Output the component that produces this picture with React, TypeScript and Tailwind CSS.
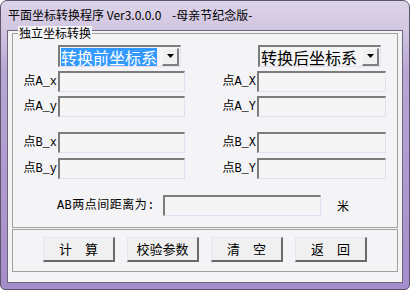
import React from "react";

const cjk = { fontFamily: '"Noto Sans CJK SC", "Liberation Sans", sans-serif' };
const mono = { fontFamily: '"Liberation Mono", "Noto Sans CJK SC", monospace' };

function Field({ w }: { w: string }) {
  return (
    <div
      className={`${w} h-[21px] bg-[#f5f5f5] border-t-2 border-l-2 border-t-[#7c7c7c] border-l-[#7c7c7c] border-r border-b border-r-[#e4def0] border-b-[#e4def0]`}
    />
  );
}

function Combo({ text, selected }: { text: string; selected?: boolean }) {
  return (
    <div className="w-[123px] h-[22px] flex items-center bg-[#f5f5f5] border-t-2 border-l-2 border-t-[#7c7c7c] border-l-[#7c7c7c] border-r border-b border-r-[#e4def0] border-b-[#e4def0] pl-[1px] pr-[1px]">
      <span
        className={`text-[16px] leading-[18px] h-[18px] ${selected ? "bg-[#3399ff] text-white" : "text-black"}`}
        style={cjk}
      >
        {text}
      </span>
      <div className="ml-auto w-[17px] h-[18px] bg-[#f0f0f0] border-t border-l border-t-[#f8f8f8] border-l-[#f8f8f8] border-r-2 border-b-2 border-r-[#808080] border-b-[#808080] flex items-center justify-center">
        <svg width="7" height="4" viewBox="0 0 7 4">
          <path d="M0 0H7L3.5 4Z" fill="#000" />
        </svg>
      </div>
    </div>
  );
}

function Row({ l, r, mt }: { l: string; r: string; mt: string }) {
  return (
    <div className={`flex items-center ${mt}`}>
      <span className="w-[45px] text-right text-[12px] leading-[14px] text-black pr-[1px]" style={mono}>
        {l}
      </span>
      <Field w="w-[127px]" />
      <span className="w-[72px] text-right text-[12px] leading-[14px] text-black pr-[1px]" style={mono}>
        {r}
      </span>
      <Field w="w-[129px]" />
    </div>
  );
}

function Btn({ children }: { children: React.ReactNode }) {
  return (
    <div
      className="w-[72px] h-[25px] bg-[#f0f0f0] border-t border-l border-t-[#ebe5f3] border-l-[#ebe5f3] border-r-2 border-b-2 border-r-[#6a6a6a] border-b-[#6a6a6a] flex items-center justify-center text-[13px] leading-[16px] text-black"
      style={cjk}
    >
      {children}
    </div>
  );
}

export default function App() {
  return (
    <div className="w-[410px] h-[290px] bg-white">
      <div className="w-[410px] h-[290px] rounded-t-[7px] rounded-b-[5px] border border-[#5c5468] bg-[linear-gradient(to_bottom,#dcd3e8_0px,#d2c6e1_28px,#b8a6d5_70px,#a58dca_290px)] flex flex-col">
        <div className="h-[28px] flex items-center pl-[7px] text-[12px] text-black whitespace-pre" style={cjk}>
          平面坐标转换程序 Ver3.0.0.0    -母亲节纪念版-
        </div>
        <div className="flex-1 mx-[6px] mb-[6px] mt-[1px] bg-[#f4f3f5] border border-[#6d6578] flex flex-col">
          <div className="relative mt-[2px] ml-[4px] w-[386px] border border-[#a0a0a0] pt-[11px] pb-[11px]">
            <span
              className="absolute left-[5px] -top-[8px] bg-[#f4f3f5] px-[1px] text-[12px] leading-[14px] text-black"
              style={cjk}
            >
              独立坐标转换
            </span>
            <div className="flex items-center">
              <div className="w-[45px]" />
              <Combo text="转换前坐标系" selected />
              <div className="w-[77px]" />
              <Combo text="转换后坐标系" />
            </div>
            <Row l="点A_x" r="点A_X" mt="mt-[4px]" />
            <Row l="点A_y" r="点A_Y" mt="mt-[4px]" />
            <Row l="点B_x" r="点B_X" mt="mt-[15px]" />
            <Row l="点B_y" r="点B_Y" mt="mt-[5px]" />
            <div className="flex items-center mt-[16px]">
              <span className="w-[150px] text-right text-[12px] leading-[14px] text-black pr-[8px] tracking-[0.5px]" style={mono}>
                AB两点间距离为:
              </span>
              <Field w="w-[158px]" />
              <span className="ml-[16px] text-[12px] leading-[14px] text-black" style={cjk}>
                米
              </span>
            </div>
          </div>
          <div className="mt-[1px] ml-[4px] w-[386px] h-[43px] border border-[#a0a0a0] pt-[7px] pl-[30px] flex gap-[12px]">
            <Btn>计　算</Btn>
            <Btn>校验参数</Btn>
            <Btn>清　空</Btn>
            <Btn>返　回</Btn>
          </div>
        </div>
      </div>
    </div>
  );
}
